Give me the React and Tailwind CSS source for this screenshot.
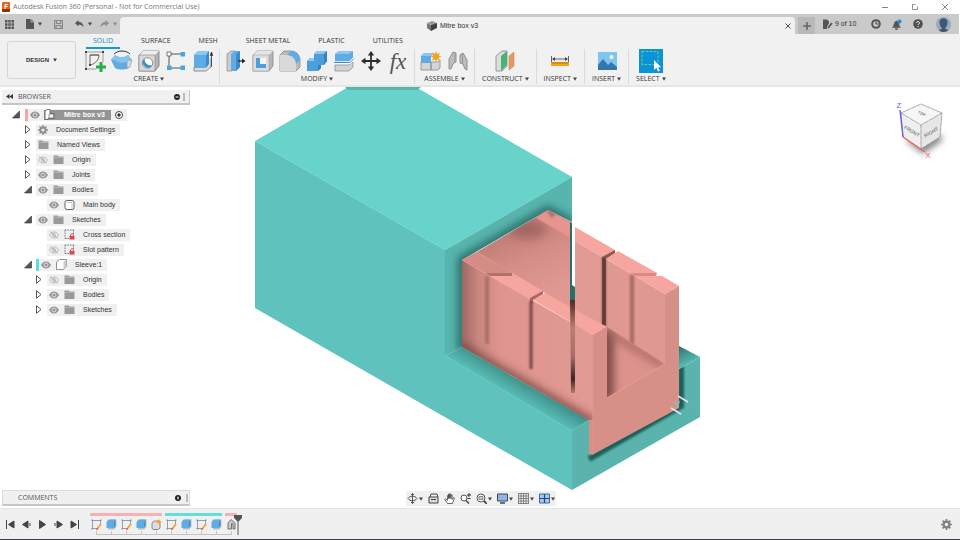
import React from "react";

const Svg = ({ w = 22, h = 22, box = "0 0 22 22", children }) => (
  <svg width={w} height={h} viewBox={box} fill="none" className="shrink-0" aria-hidden="true">
    {children}
  </svg>
);

const Caret = () => (
  <svg width="4" height="4" viewBox="0 0 4 4" className="shrink-0" aria-hidden="true">
    <path d="M0 0.500h4L2 3.800z" fill="#444" />
  </svg>
);

/* ---------- toolbar icons ---------- */

const SketchIcon = () => (
  <Svg>
    <path d="M3 2h15M2 3v15M3 19h9M19 3v9" stroke="#888" strokeWidth="0.800" />
    <path d="M6 5v10c5-1 9-5 9-10zM6 5l9 0" stroke="#666" strokeWidth="1" />
    <path d="M1 1h2v2H1zM18 1h2v2h-2zM1 18h2v2H1zM5 14h2v2H5z" fill="#444" />
    <path d="M15.500 12h3v3.500H22v3h-3.500V22h-3v-3.500H12v-3h3.500z" fill="#27ae48" />
  </Svg>
);
const RevolveIcon = () => (
  <Svg>
    <path d="M3 4C7 0 15 0 19 4" stroke="#333" strokeWidth="1" />
    <path d="M0 10l4-5c4 3 9 3 13 0l4 5-3 8c-4 2-10 2-14 0z" fill="#5fabe3" />
    <path d="M0 10l4-5c4 3 9 3 13 0l4 5c-3 0-4 0-5 2-3 1-7 1-10 0-1-2-3-2-6-2z" fill="#84c3ee" />
    <path d="M21 10l-2 7-3 1v-6c1-2 3-2 5-2z" fill="#d8d8d8" stroke="#999" strokeWidth="0.600" />
  </Svg>
);
const HoleIcon = () => (
  <Svg>
    <path d="M1 5l4-4h16v15l-4 5H1z" fill="#b5b5b5" stroke="#777" strokeWidth="0.800" />
    <path d="M1 5l4-4h16l-4 4z" fill="#eee" />
    <path d="M1 5h16v16H1z" fill="#d8d8d8" stroke="#888" strokeWidth="0.600" />
    <circle cx="9.500" cy="13" r="5.200" fill="#fff" stroke="#777" strokeWidth="0.800" />
    <path d="M6 9.500a5 5 0 0 0 7.500 6.500 7 7 0 0 1-7.500-6.500z" fill="#3b8fd0" stroke="#3b8fd0" />
  </Svg>
);
const PatternIcon = () => (
  <Svg>
    <path d="M6 4h10M4 6v10M6 18h10" stroke="#555" strokeWidth="1" />
    <path d="M2 2h4v4H2z" fill="#fff" stroke="#555" strokeWidth="0.800" />
    <path d="M15.500 2h4.500v4.500h-4.500zM2 15.500h4.500V20H2zM15.500 15.500H20V20h-4.500z" fill="#4ea3e0" />
  </Svg>
);
const ExtrudeIcon = () => (
  <Svg>
    <path d="M2 17v4h12l5-4V8" fill="#ddd" stroke="#777" strokeWidth="0.800" />
    <path d="M2 5l4-4h11l-3 4v13H2z" fill="#5fabe3" />
    <path d="M2 5l4-4h11l-3 4z" fill="#8cc8f0" />
    <path d="M14 5l3-4v13l-3 4z" fill="#3a8ccc" />
    <path d="M19.500 17V5M18.300 5.500L19.500 2l1.200 3.500z" stroke="#333" strokeWidth="0.800" fill="#333" />
  </Svg>
);
const PressPullIcon = () => (
  <Svg>
    <path d="M2 4l4-3h4v17l-3 3H2z" fill="#ccc" stroke="#888" strokeWidth="0.700" />
    <path d="M6 4l4-3h5v16l-4 4H6z" fill="#5fabe3" />
    <path d="M11 4l4-3v16l-4 4z" fill="#3a8ccc" />
    <path d="M13 11h5" stroke="#222" strokeWidth="1.200" />
    <path d="M17 8.500l3.500 2.500-3.500 2.500z" fill="#222" />
  </Svg>
);
const ShellIcon = () => (
  <Svg>
    <path d="M1 5l4-4h16v15l-4 5H1z" fill="#b5b5b5" stroke="#888" strokeWidth="0.800" />
    <path d="M1 5l4-4h16l-4 4z" fill="#e6e6e6" />
    <path d="M1 5h16v16H1z" fill="#ddd" stroke="#999" strokeWidth="0.500" />
    <path d="M4 8h10v10H4z" fill="#cde6f7" />
    <path d="M4 8h4v6l6 0v4H4z" fill="#4c9edb" />
    <path d="M8 8h6v6H8z" fill="#f4f4f4" />
  </Svg>
);
const FilletIcon = () => (
  <Svg>
    <path d="M1 5l4-4h7c5 0 9 4 9 9v7l-4 4H1z" fill="#bbb" stroke="#888" strokeWidth="0.800" />
    <path d="M1 5h7c5 0 9 4 9 9v7H1z" fill="#d9d9d9" />
    <path d="M8 5l4-4c5 0 9 4 9 9l-4 4c0-5-4-9-9-9z" fill="#5fabe3" />
  </Svg>
);
const CombineIcon = () => (
  <Svg>
    <path d="M1 11l3-3h4V4l3-3h10v10l-3 4h-3v3l-3 3H1z" fill="#4c9edb" />
    <path d="M1 11l3-3h4v3zM8 4l3-3h10l-3 3z" fill="#8cc8f0" />
    <path d="M18 4l3-3v10l-3 4zM12 15h3v3l-3 3z" fill="#3382c2" />
  </Svg>
);
const SplitIcon = () => (
  <Svg>
    <path d="M2 4l4-3h14v8l-4 3H2z" fill="#5fabe3" />
    <path d="M2 4l4-3h14l-4 3z" fill="#8cc8f0" />
    <path d="M2 15h14l4-3v5l-4 4H2z" fill="#d3d3d3" stroke="#888" strokeWidth="0.700" />
    <path d="M1 12.500h16l4-4" stroke="#fff" strokeWidth="2.500" />
    <path d="M1 12.500h16l4-4" stroke="#3a8ccc" strokeWidth="1" />
  </Svg>
);
const MoveIcon = () => (
  <Svg>
    <path d="M11 4v14M4 11h14" stroke="#2d2d2d" strokeWidth="1.800" />
    <path d="M11 1l3.200 4.500H7.800zM11 21l3.200-4.500H7.800zM1 11l4.500-3.200v6.400zM21 11l-4.500-3.200v6.400z" fill="#2d2d2d" />
  </Svg>
);
const FxIcon = () => (
  <span className="w-[22px] h-[22px] flex items-center justify-center font-['Liberation_Serif',serif] italic text-[23px] leading-none text-[#555]">fx</span>
);
const ComponentIcon = () => (
  <Svg>
    <path d="M1 12h10v8H1zM11 12h7l2-2v8l-2 2h-7z" fill="#d5d5d5" stroke="#888" strokeWidth="0.800" />
    <path d="M1 6l3-3h10l-3 3v7H1z" fill="#5fabe3" />
    <path d="M1 6l3-3h10l-3 3z" fill="#8cc8f0" />
    <path d="M16 1l1 3 3-1.500L18.500 5.500l3 1-3 1.200 1.500 3L17 9.200 16 12l-1.200-2.800-3 1.300 1.500-2.800-3-1.200 3-1L12 2.500 14.800 4z" fill="#f5a31a" />
  </Svg>
);
const JointIcon = () => (
  <Svg>
    <path d="M2 19V9l4-7 3 1v9l-2 1-1 1-2 5z" fill="#bdbdbd" stroke="#888" strokeWidth="0.900" />
    <path d="M20 20V10l-4-7-3 2v8l3 1 2 5z" fill="#bdbdbd" stroke="#888" strokeWidth="0.900" />
    <path d="M8 3v9M15.500 4v9" stroke="#999" />
  </Svg>
);
const ConstructIcon = () => (
  <Svg>
    <path d="M2 6l6-5h5v15l-5 5H2z" fill="#ddd" stroke="#888" strokeWidth="0.800" />
    <path d="M7 6l6-5v14l-6 6z" fill="#45b576" />
    <path d="M15 6l5-4v14l-5 4z" fill="#e79763" stroke="#cf7d4a" strokeWidth="0.500" />
  </Svg>
);
const InspectIcon = () => (
  <Svg>
    <path d="M2.500 6v6M19.500 6v6M4 9h14" stroke="#555" strokeWidth="0.900" />
    <path d="M3 9l3-2v4zM19 9l-3-2v4z" fill="#444" />
    <path d="M2 12h18v4H2z" fill="#f2a41c" />
    <path d="M4 12v2M6 12v2M8 12v2M10 12v2M12 12v2M14 12v2M16 12v2M18 12v2" stroke="#8a5a00" strokeWidth="0.600" />
  </Svg>
);
const InsertIcon = () => (
  <Svg>
    <path d="M2 2h19v18H2z" fill="#7fc5f4" />
    <path d="M2 15l5-6 5 6 3-3 6 5v3H2z" fill="#3577aa" />
    <circle cx="15.500" cy="7" r="2" fill="#fff7c9" />
  </Svg>
);
const SelectIcon = () => (
  <Svg w={24} h={24} box="0 0 24 24">
    <path d="M0 0h24v24H0z" fill="#0b93d8" />
    <path d="M3 2.500h16v13H3z" stroke="#7ddc6e" strokeWidth="0.900" strokeDasharray="2.500 1.500" />
    <path d="M15 11v10l2.400-2.200 1.600 3.700 1.800-0.800-1.600-3.500h3z" fill="#fff" />
  </Svg>
);

const groups = [
  { name: "CREATE", icons: [SketchIcon, RevolveIcon, HoleIcon, PatternIcon, ExtrudeIcon], wide: true },
  { name: "MODIFY", icons: [PressPullIcon, ShellIcon, FilletIcon, CombineIcon, SplitIcon, MoveIcon, FxIcon], wide: true },
  { name: "ASSEMBLE", icons: [ComponentIcon, JointIcon], wide: true },
  { name: "CONSTRUCT", icons: [ConstructIcon] },
  { name: "INSPECT", icons: [InspectIcon] },
  { name: "INSERT", icons: [InsertIcon] },
  { name: "SELECT", icons: [SelectIcon] },
];

const tabs = ["SOLID", "SURFACE", "MESH", "SHEET METAL", "PLASTIC", "UTILITIES"];

/* ---------- browser tree icons ---------- */

const Eye = ({ off }) => (
  <Svg w={10} h={8} box="0 0 10 8">
    {off ? (
      <>
        <path d="M0.500 4C2 1.500 3.500 1 5 1s3 0.500 4.500 3C8 6.500 6.500 7 5 7S2 6.500 0.500 4zM1 0.500l8 7" stroke="#aaa" strokeWidth="0.800" />
        <circle cx="5" cy="4" r="1.500" stroke="#aaa" strokeWidth="0.800" />
      </>
    ) : (
      <>
        <path d="M0 4C1.500 1.500 3 0.500 5 0.500S8.500 1.500 10 4C8.500 6.500 7 7.500 5 7.500S1.500 6.500 0 4z" fill="#959595" />
        <circle cx="5" cy="4" r="2" fill="#959595" stroke="#eee" strokeWidth="0.800" />
      </>
    )}
  </Svg>
);
const Folder = () => (
  <Svg w={11} h={9} box="0 0 11 9">
    <path d="M0.500 0.500h4l1 1h5V9h-10z" fill="#999" />
    <path d="M0.500 2.300h10" stroke="#ccc" strokeWidth="0.600" />
  </Svg>
);
const Gear = ({ size = 10, color = "#8d8d8d" }) => (
  <Svg w={size} h={size} box="0 0 10 10">
    <circle cx="5" cy="5" r="2.600" stroke={color} strokeWidth="2" />
    <path d="M5 0v2M5 8v2M0 5h2M8 5h2M1.500 1.500l1.300 1.300M7.200 7.200l1.300 1.300M1.500 8.500l1.300-1.300M7.200 2.800l1.300-1.300" stroke={color} strokeWidth="1.500" />
  </Svg>
);
const Body = () => (
  <Svg w={11} h={10} box="0 0 11 10">
    <rect x="1" y="0.500" width="9" height="9" rx="2" fill="#fff" stroke="#555" strokeWidth="0.900" />
    <path d="M3 2.500h5v6" stroke="#aab" strokeWidth="0.700" />
  </Svg>
);
const Cube = () => (
  <Svg w={11} h={11} box="0 0 11 11">
    <path d="M0.500 3l3-2.500h7v7l-3 3h-7z" fill="#fff" stroke="#777" strokeWidth="0.800" />
    <path d="M7.500 3l3-2.500v7l-3 3z" fill="#ccc" />
  </Svg>
);
const LockedSketch = () => (
  <Svg w={11} h={11} box="0 0 11 11">
    <path d="M1 1h8.500M1 1v8.500M9.500 1v5M1 9.500h5" stroke="#666" strokeWidth="0.900" strokeDasharray="1.500 1" />
    <path d="M5.500 7h5v3.500h-5z" fill="#d9484c" />
    <path d="M6.500 7c0-3 3-3 3 0" stroke="#d9484c" />
  </Svg>
);
const Assembly = () => (
  <Svg w={11} h={11} box="0 0 11 11">
    <path d="M1 2l2-1.500h3v4h4v5H4v1H1z" fill="#fff" stroke="#555" strokeWidth="0.800" />
    <path d="M5 5h4.500v4H5z" fill="#f4f4f4" stroke="#666" strokeWidth="0.600" />
  </Svg>
);

const Arrow = ({ open }) => (
  <Svg w={8} h={9} box="0 0 8 9">
    {open ? <path d="M7.500 1v7H0.500z" fill="#555" stroke="#333" strokeWidth="0.600" /> : <path d="M1.500 0.700v7.600l4.500-3.800z" fill="#fff" stroke="#444" strokeWidth="0.900" />}
  </Svg>
);

const tree = [
  { label: "Document Settings", icon: Gear, arrow: "closed" },
  { label: "Named Views", icon: Folder, arrow: "closed" },
  { label: "Origin", icon: Folder, eye: "off", arrow: "closed" },
  { label: "Joints", icon: Folder, eye: "on", arrow: "closed" },
  { label: "Bodies", icon: Folder, eye: "on", arrow: "open" },
  { label: "Main body", icon: Body, eye: "on", deep: true },
  { label: "Sketches", icon: Folder, eye: "on", arrow: "open" },
  { label: "Cross section", icon: LockedSketch, eye: "off", deep: true },
  { label: "Slot pattern", icon: LockedSketch, eye: "off", deep: true },
  { label: "Sleeve:1", icon: Cube, eye: "on", arrow: "open", bar: true },
  { label: "Origin", icon: Folder, eye: "off", arrow: "closed", deep: true },
  { label: "Bodies", icon: Folder, eye: "on", arrow: "closed", deep: true },
  { label: "Sketches", icon: Folder, eye: "on", arrow: "closed", deep: true },
];

const TreeRow = ({ row }) => (
  <li className={row.deep ? "flex items-center h-[15px] pl-[33px]" : "flex items-center h-[15px] pl-[22px]"}>
    <span className="w-3 flex">{row.arrow && <Arrow open={row.arrow === "open"} />}</span>
    <div className="flex items-center h-3 bg-[#f0f0f0] pr-[5px]">
      {row.bar && <span className="w-[3px] h-3 bg-[#5fdce0]" />}
      <span className="flex items-center gap-[5px] pl-[2px] pr-2">
        {row.eye && <Eye off={row.eye === "off"} />}
        <row.icon />
      </span>
      <span>{row.label}</span>
    </div>
  </li>
);

const BrowserPanel = () => (
  <section className="w-[188px]">
    <header className="flex items-center h-[15px] bg-[#f0f0f0] border-b-2 border-r border-[#c6c6c6] px-1 text-[#555] font-['Open_Sans',sans-serif]">
      <Svg w={7} h={5} box="0 0 7 5"><path d="M3.500 0v5L0 2.500zM7 0v5L3.500 2.500z" fill="#333" /></Svg>
      <h2 className="ml-[5px]">BROWSER</h2>
      <button className="ml-auto mr-[3px]" aria-label="Collapse browser">
        <Svg w={6} h={6} box="0 0 6 6"><circle cx="3" cy="3" r="3" fill="#222" /><path d="M1.500 3h3" stroke="#fff" /></Svg>
      </button>
      <span className="w-[2px] h-2 border-x border-[#bbb]" />
    </header>
    <ul className="mt-[2px]">
      <li className="flex items-center h-[15px] pl-[10px]">
        <Arrow open />
        <div className="ml-[5px] flex items-center h-3 bg-[#f0f0f0] pr-1">
          <span className="w-[3px] h-3 bg-[#f7a5a5]" />
          <span className="ml-[2px] mr-1 flex"><Eye /></span>
          <span className="flex items-center h-[10px] bg-[#959595] text-white font-bold pr-[6px]">
            <Assembly />
            <span className="ml-[9px]">Mitre box v3</span>
          </span>
          <label className="ml-1 flex">
            <input type="radio" defaultChecked aria-label="Activate Mitre box v3" className="appearance-none w-[8px] h-[8px] rounded-full border border-[#444] bg-[radial-gradient(circle,#333_35%,#fff_40%)]" />
          </label>
        </div>
      </li>
      {tree.map((row, i) => (
        <TreeRow key={i} row={row} />
      ))}
    </ul>
  </section>
);

/* ---------- 3d model ---------- */

const Model = () => (
  <svg viewBox="0 87 960 421" preserveAspectRatio="xMidYMid slice" className="absolute inset-0 w-full h-full" role="img" aria-label="Mitre box model">
    <defs>
      <filter id="soft" filterUnits="userSpaceOnUse" x="240" y="80" width="480" height="430"><feGaussianBlur stdDeviation="4" /></filter>
      <filter id="tiny" filterUnits="userSpaceOnUse" x="240" y="80" width="480" height="430"><feGaussianBlur stdDeviation="1.300" /></filter>
      <linearGradient id="wall" gradientUnits="userSpaceOnUse" x1="462" y1="0" x2="593" y2="0">
        <stop offset="0" stopColor="#9f6863" /><stop offset="0.120" stopColor="#c9857f" /><stop offset="0.300" stopColor="#de958f" /><stop offset="1" stopColor="#e29a94" />
      </linearGradient>
      <linearGradient id="slot" x1="0" y1="0" x2="0" y2="1">
        <stop offset="0" stopColor="#4a2b28" /><stop offset="0.300" stopColor="#bd7b75" /><stop offset="0.600" stopColor="#a96e68" /><stop offset="0.850" stopColor="#3c2523" /><stop offset="1" stopColor="#b87973" />
      </linearGradient>
      <linearGradient id="inside" gradientUnits="userSpaceOnUse" x1="520" y1="225" x2="550" y2="290">
        <stop offset="0" stopColor="#c07c76" /><stop offset="0.500" stopColor="#d68e88" /><stop offset="1" stopColor="#e09892" />
      </linearGradient>
      <linearGradient id="ledge" gradientUnits="userSpaceOnUse" x1="524" y1="380" x2="512" y2="400">
        <stop offset="0" stopColor="#3d8c86" /><stop offset="1" stopColor="#5ec8c0" />
      </linearGradient>
      <linearGradient id="backLedge" gradientUnits="userSpaceOnUse" x1="680" y1="346" x2="690" y2="366">
        <stop offset="0" stopColor="#2d746f" /><stop offset="1" stopColor="#5bc4bc" />
      </linearGradient>
      <clipPath id="frameClip"><path d="M445 250L572 177V222L548 210L462 260V347L445 356z" /></clipPath>
      <clipPath id="insideClip"><path d="M477 252L535 218L548 210L571 222V320L545 293z" /></clipPath>
      <clipPath id="leftClip"><path d="M462 260L490 276L530 299L593 335V454H590V421L462 347z" /></clipPath>
      <clipPath id="floorClip"><path d="M607 327L665 364L607 398z" /></clipPath>
      <clipPath id="frontClip"><path d="M572 431L589 420L683 367L700 357V417L572 490z" /></clipPath>
      <clipPath id="rightClip"><path d="M575 241L602 257L606 259L665 294V364L607 331L575 312z" /></clipPath>
    </defs>

    {/* outer box */}
    <path d="M255 141L350 86H414L572 177L445 250z" fill="#67d3ca" />
    <path d="M345 87H421L417 90H348z" fill="#56b6ae" />
    <path d="M255 141L445 250V356L572 431V490L255 308z" fill="#5fc2bc" />
    <path d="M445 250L572 177V222L548 210L462 260V347L445 356z" fill="#58b5ae" />
    <g clipPath="url(#frameClip)">
      <path d="M462 352V260L548 210L573 224" stroke="#26645f" strokeWidth="8" fill="none" filter="url(#soft)" />
    </g>
    <path d="M445 356L462 347L589 420L572 431z" fill="url(#ledge)" />
    <path d="M445 356L572 431L589 420" stroke="#63cbc3" strokeWidth="1" fill="none" />
    <path d="M572 431L589 420L683 367L700 357V417L572 490z" fill="#5ab4ad" />
    <path d="M679 346L700 357L683 367L679 369z" fill="url(#backLedge)" />
    <g clipPath="url(#frontClip)">
      <path d="M589 459L681 406V366" stroke="#1f5e59" strokeWidth="6" fill="none" filter="url(#tiny)" />
    </g>

    {/* sleeve, far side */}
    <path d="M477 252L548 210L571 222V320L545 293z" fill="url(#inside)" />
    <g clipPath="url(#insideClip)">
      <ellipse cx="528" cy="230" rx="18" ry="9" fill="#8d5852" filter="url(#soft)" opacity="0.600" />
      <path d="M536 218L548 210L571 223V238z" fill="#e5958e" />
      <path d="M545 209L556 214L552 218z" fill="#7a4641" filter="url(#tiny)" opacity="0.500" />
    </g>
    <path d="M575 227L615 250V253L606 259L602 257L575 241z" fill="#f6a69e" />
    <path d="M575 241L602 257V340L575 325z" fill="#e29a94" />
    <path d="M602 257L615 250V253L606 259V335L602 330z" fill="#8c5651" />
    <path d="M606 259L665 294V364L606 330z" fill="#e09892" />
    <path d="M606 259L618 251L657 273L656 276H662L679 286L665 294z" fill="#f6a69e" />
    <path d="M630 273H657L655 276H635z" fill="#d68b84" />
    <g clipPath="url(#rightClip)">
      <path d="M632 275V345" stroke="#99605b" strokeWidth="4" filter="url(#tiny)" opacity="0.800" />
      <path d="M604 256V330" stroke="#55302d" strokeWidth="3" filter="url(#tiny)" />
    </g>

    {/* sleeve floor */}
    <path d="M604 325L665 364L607 398z" fill="#dd938c" />
    <g clipPath="url(#floorClip)">
      <path d="M607 330V400" stroke="#7d4c47" strokeWidth="14" filter="url(#soft)" />
      <path d="M607 332L665 366" stroke="#a0645f" strokeWidth="6" filter="url(#soft)" />
    </g>

    {/* gap between the two far walls */}
    <path d="M572 172H575V285H572z" fill="#fff" />
    <path d="M570 222L572 223V285L575 287V300H570z" fill="#2a6e69" />

    {/* sleeve, near side */}
    <path d="M462 260L593 335V454H589V420L462 347z" fill="url(#wall)" />
    <path d="M462 260L477 252L512 273L543 291V293L533 299L530 299L490 276z" fill="#f1a098" />
    <path d="M462 260L477 252L512 273H485z" fill="#d48c85" />
    <path d="M485 273H512V276H490z" fill="#b3716b" />
    <path d="M490 276H517L543 291L530 298z" fill="#f6a69e" />
    <path d="M533 300L545 293L607 327L593 335z" fill="#f6a69e" />
    <path d="M530 298L543 291V294L533 300V304L530 302z" fill="#a9675f" />
    <g clipPath="url(#leftClip)">
      <path d="M459 346L593 423" stroke="#6d3f3b" strokeWidth="9" filter="url(#soft)" opacity="0.800" />
      <path d="M487 276V344" stroke="#a9706a" strokeWidth="4" filter="url(#tiny)" />
      <path d="M531 301V369" stroke="#74433f" strokeWidth="3" filter="url(#tiny)" />
    </g>
    <path d="M570 300H575V393H571z" fill="url(#slot)" />
    <path d="M593 335L607 327V398L665 364V294L679 286V408L592 455L589 452V420H593z" fill="#d69088" />
    <path d="M607 398L665 364" stroke="#e39c94" strokeWidth="1" />
    <path d="M593 335V454" stroke="#df978f" strokeWidth="1" />
    <path d="M678 396L688 402M671 408L681 414" stroke="#e6e6e6" strokeWidth="1.500" />
    <path d="M672 402L680 401L678 408z" fill="#a9a9a5" />
  </svg>
);

const ViewCube = () => (
  <svg width="60" height="66" viewBox="0 0 60 66" className="shrink-0" role="img" aria-label="View cube">
    <defs>
      <filter id="shadow" x="-30%" y="-30%" width="160%" height="160%"><feGaussianBlur stdDeviation="3" /></filter>
    </defs>
    <path d="M12 42L30 56L50 42L46 36z" fill="#888" filter="url(#shadow)" />
    <path d="M8 14L28 6L49 15L28 27z" fill="#f6f6f6" />
    <path d="M8 15L28 27V51L10 39z" fill="#efefef" />
    <path d="M28 27L49 15L47 39L28 51z" fill="#e6e6e6" />
    <path d="M8 15L28 6L49 15L28 27zM8 15L10 39L28 51V27M28 51L47 39L49 15" stroke="#888" strokeWidth="0.700" strokeDasharray="5 0.500" fill="none" />
    <path d="M7 12L10 39" stroke="#6262ee" strokeWidth="1.400" />
    <path d="M10 39L32 54" stroke="#f06464" strokeWidth="1.400" />
    <g className="font-['Liberation_Sans',sans-serif] font-bold" fill="#888" textAnchor="middle">
      <text x="19" y="35" fontSize="5" transform="rotate(31 19 33)">FRONT</text>
      <text x="38" y="36" fontSize="5" transform="rotate(-31 38 34)">RIGHT</text>
      <text x="29" y="17" fontSize="4" transform="rotate(24 29 15)">TOP</text>
    </g>
    <g className="font-['Liberation_Sans',sans-serif]" textAnchor="middle" fontSize="8">
      <text x="6" y="10" fill="#6262ee">Z</text>
      <text x="35" y="60" fill="#f06464">X</text>
    </g>
  </svg>
);

/* ---------- navigation bar under the canvas ---------- */

const navItems = [
  { name: "Orbit", menu: true, art: <path d="M5.500 0.500v10M4 2l1.500-1.500L7 2M4 9l1.500 1.500L7 9M1 5.500c2-3 7-3 9 0-2 3-7 3-9 0z" stroke="#444" strokeWidth="0.900" /> },
  { name: "Look at", art: <><path d="M1 4h9v6H1z" fill="#ddd" stroke="#444" /><path d="M2 4l1-3h6l1 3M3 6.500h5" stroke="#444" /></> },
  { name: "Pan", art: <path d="M3.500 10.500L0.800 6.500l1-0.700L3.500 7.500V2.500h1V5.500V1h1.200V5.500V1h1.200V5.500V2h1.200V6.500l1.500-2 0.800 0.500L8.500 10.500z" fill="#fff" stroke="#444" strokeWidth="0.800" /> },
  { name: "Zoom", art: <><circle cx="4" cy="5" r="3" fill="#fff" stroke="#555" /><path d="M6 7.500L9 10.500" stroke="#444" strokeWidth="1.500" /><path d="M9 0v4M7 2h4M7.500 5.500h3" stroke="#333" /></> },
  { name: "Fit", menu: true, art: <><circle cx="5" cy="5" r="4" fill="#fff" stroke="#555" /><path d="M3 3.500h4v3H3z" fill="#ccc" stroke="#666" strokeWidth="0.700" /><path d="M8 8l3 3" stroke="#444" strokeWidth="1.800" /></> },
  { name: "Display settings", menu: true, art: <><path d="M0.500 1h10v7h-10z" fill="#8bb6e6" stroke="#445" /><path d="M3 10h5" stroke="#445" strokeWidth="1.500" /></> },
  { name: "Grid and snaps", menu: true, art: <path d="M0.500 0.500h10M0.500 3h10M0.500 5.500h10M0.500 8h10M0.500 10.500h10M0.500 0v11M3 0v11M5.500 0v11M8 0v11M10.500 0v11" stroke="#777" strokeWidth="0.900" /> },
  { name: "Viewports", menu: true, art: <><path d="M0.500 1h10v9h-10z" fill="#a9c8ee" stroke="#456b9c" /><path d="M5.500 1v9M0.500 5.500h10" stroke="#234a80" strokeWidth="1.200" /></> },
];

/* ---------- timeline ---------- */

const TlSketch = () => (
  <Svg w={11} h={11} box="0 0 11 11">
    <path d="M1 1.500h8M1.500 1v8M2 9.500h5M9.500 2v4" stroke="#888" strokeWidth="0.800" />
    <path d="M0.500 0.500h1.500v1.500H0.500zM9 0.500h1.500v1.500H9zM0.500 9h1.500v1.500H0.500z" fill="#4ea3e0" />
    <path d="M6 10l4-5" stroke="#f0a030" strokeWidth="1.800" />
    <path d="M5.500 10.700l1-1.200" stroke="#d33" strokeWidth="1.200" />
  </Svg>
);
const TlExtrude = () => (
  <Svg w={11} h={11} box="0 0 11 11">
    <path d="M2 3l2-2.500h6.500V8L8 10.500H2z" fill="#bbb" />
    <path d="M0.500 3l2-2.500h7L8 3v6H0.500z" fill="#5fabe3" />
    <path d="M8 3l1.500-2.500v6L8 9z" fill="#3a8ccc" />
  </Svg>
);
const TlComponent = () => (
  <Svg w={11} h={11} box="0 0 11 11">
    <path d="M1 4l2-2h5l1 2v5l-2 1.500H2L1 9z" fill="#ddd" stroke="#777" strokeWidth="0.800" />
    <path d="M8 0l0.800 1.800L11 2.500 9.300 3.500 9 6 7.500 4 5.500 4.200 6.500 2.500z" fill="#f5a31a" />
  </Svg>
);
const TlJoint = () => (
  <Svg w={11} h={11} box="0 0 11 11">
    <path d="M2 10V4l3-3.500 4 3.500v6H7V5L5.500 4.500V10z" fill="#ccc" stroke="#666" strokeWidth="0.900" />
  </Svg>
);

const timeline = [
  { bar: "bg-[#fbb0b0] w-[72px]", track: "border-b", items: [TlSketch, TlExtrude, TlSketch, TlExtrude, TlComponent] },
  { bar: "bg-[#62dde0] w-[57px]", track: "border-b", items: [TlSketch, TlExtrude, TlSketch, TlExtrude] },
  { bar: "bg-[#fbb0b0] w-[12px]", track: "", items: [TlJoint] },
];

const playback = [
  { name: "Go to start", d: "M1.500 1v9M9 2v7L3.500 5.500z" },
  { name: "Step back", d: "M7 2v7L1.500 5.500zM9 4v3" },
  { name: "Play", d: "M2.500 1.500v8l6-4z" },
  { name: "Step forward", d: "M4 2v7l5.500-3.500zM2 4v3" },
  { name: "Go to end", d: "M9.500 1v9M2 2v7l5.500-3.500z" },
];

const Timeline = () => (
  <footer className="flex items-center h-8 shrink-0 bg-[#f0f0f0] border-t border-[#e2e2e2] border-b border-b-[#3c3c44] px-[5px]">
    <div className="flex gap-[5px]">
      {playback.map((p) => (
        <button key={p.name} aria-label={p.name}>
          <Svg w={11} h={11} box="0 0 11 11">
            <path d={p.d} fill="#444" stroke="#444" strokeWidth="1" />
          </Svg>
        </button>
      ))}
    </div>
    <ol className="ml-[10px] flex">
      {timeline.map((g, i) => (
        <li key={i} className="last:w-2">
          <div className={`h-[3px] ${g.bar}`} />
          <div className="flex gap-1 mt-[3px] pl-px">
            {g.items.map((Item, j) => (
              <button key={j} aria-label="Feature" className="shrink-0"><Item /></button>
            ))}
          </div>
          <div className={`ml-[6px] -mr-[6px] mt-px h-[4px] flex border-[#c4c4c4] ${g.track}`}>
            {g.items.map((_, j) => (
              <span key={j} className="w-[15px] border-l border-[#c4c4c4]" />
            ))}
          </div>
        </li>
      ))}
    </ol>
    <Svg w={10} h={22} box="0 0 10 22">
      <path d="M1 2h8v3L5.500 8.500V22h-1V8.500L1 5z" fill="#555" />
    </Svg>
    <button className="ml-auto mr-[3px]" aria-label="Timeline settings"><Gear size={11} color="#808080" /></button>
  </footer>
);

const App = () => {
  return (
    <div className="h-screen flex flex-col overflow-hidden bg-white text-[7px] leading-[10px] text-[#333] font-['Liberation_Sans',sans-serif]">
      {/* title bar */}
      <div className="flex items-center h-[14px] shrink-0 px-[2px]">
        <Svg w={8} h={10} box="0 0 8 10">
          <rect width="8" height="10" rx="1" fill="#e8641b" />
          <path d="M0 7h8v2l-1 1H1L0 9z" fill="#8c3005" />
          <path d="M3 7V2.500h3M3 4.500h2.500" stroke="#fff" />
        </Svg>
        <span className="ml-[3px] text-[#777] font-['Open_Sans',sans-serif]">Autodesk Fusion 360 (Personal - Not for Commercial Use)</span>
        <div className="ml-auto mr-[10px] flex gap-6">
          <button aria-label="Minimize"><Svg w={6} h={6} box="0 0 6 6"><path d="M0 3.500h6" stroke="#666" strokeWidth="0.800" /></Svg></button>
          <button aria-label="Maximize"><Svg w={6} h={6} box="0 0 6 6"><path d="M0.500 0.500v5h5v-3M0.500 0.500h3" stroke="#777" strokeWidth="0.800" /></Svg></button>
          <button aria-label="Close"><Svg w={6} h={6} box="0 0 6 6"><path d="M0 0l6 6M6 0L0 6" stroke="#666" strokeWidth="0.800" /></Svg></button>
        </div>
      </div>

      {/* document tabs */}
      <div className="flex h-5 shrink-0 bg-[#cacaca] border-r border-white">
        <div className="w-[120px] flex items-center pl-[5px]">
          <button aria-label="Data panel">
            <Svg w={9} h={9} box="0 0 9 9">
              <path d="M0 0h2.500v2.500H0zM3.200 0h2.500v2.500H3.200zM6.500 0H9v2.500H6.500zM0 3.200h2.500v2.500H0zM3.200 3.200h2.500v2.500H3.200zM6.500 3.200H9v2.500H6.500zM0 6.500h2.500V9H0zM3.200 6.500h2.500V9H3.200zM6.500 6.500H9V9H6.500z" fill="#555" />
            </Svg>
          </button>
          <button className="ml-3 flex items-center gap-1" aria-label="File">
            <Svg w={8} h={10} box="0 0 8 10"><path d="M0 0h5l3 3v7H0z" fill="#555" /><path d="M5 0v3h3" stroke="#ccc" strokeWidth="0.700" /></Svg>
            <Caret />
          </button>
          <button className="ml-3" aria-label="Save">
            <Svg w={9} h={9} box="0 0 9 9"><path d="M0.500 0.500h8v8h-8zM2.500 0.500v3h4v-3M2 8.500v-3h5v3" stroke="#888" strokeWidth="1.200" /></Svg>
          </button>
          <button className="ml-3 flex items-center gap-1" aria-label="Undo">
            <Svg w={9} h={8} box="0 0 9 8"><path d="M3.500 0v2c3 0 5 2 5 5.500C7.500 5.500 6 4.500 3.500 4.500v2L0 3.200z" fill="#555" /></Svg>
            <Caret />
          </button>
          <button className="ml-2 flex items-center gap-1 opacity-50" aria-label="Redo">
            <Svg w={9} h={8} box="0 0 9 8"><path d="M5.500 0v2c-3 0-5 2-5 5.500C1.500 5.500 3 4.500 5.500 4.500v2L9 3.200z" fill="#555" /></Svg>
            <Caret />
          </button>
        </div>
        <div className="flex-1 mt-[3px] bg-[#f1f1f1] flex items-center rounded-t-sm">
          <div className="flex-1 flex items-center justify-center gap-[3px]">
            <Svg w={10} h={10} box="0 0 10 10">
              <path d="M0 2l5-2 5 2-5 2z" fill="#999" /><path d="M0 2l4 2v6L0 7z" fill="#777" /><path d="M10 2L4 4v6l6-3z" fill="#444" />
            </Svg>
            <span>Mitre box v3</span>
          </div>
          <button className="mr-1" aria-label="Close tab"><Svg w={6} h={6} box="0 0 6 6"><path d="M0.500 0.500l5 5M5.500 0.500l-5 5" stroke="#555" /></Svg></button>
        </div>
        <div className="w-[164px] flex items-center">
          <button className="ml-[3px] w-[17px] mt-[3px] h-[17px] bg-[#b9b9b9] flex items-center justify-center" aria-label="New tab">
            <Svg w={8} h={8} box="0 0 8 8"><path d="M4 0v8M0 4h8" stroke="#666" strokeWidth="1.600" /></Svg>
          </button>
          <button className="ml-2 flex items-center gap-[2px]">
            <Svg w={10} h={10} box="0 0 10 10"><path d="M0 0.500h4l2 2v2l-2 3V10H0z" fill="#555" /><path d="M5 9l4-5" stroke="#555" strokeWidth="1.800" /></Svg>
            <span>9 of 10</span>
          </button>
          <div className="ml-auto mr-2 flex items-center gap-[11px]">
            <button aria-label="Job status"><Svg w={10} h={10} box="0 0 10 10"><circle cx="5" cy="5" r="4.800" fill="#555" /><circle cx="5" cy="5" r="2.800" fill="#ccc" /><path d="M5 2.500V5h2.500" stroke="#444" /></Svg></button>
            <button aria-label="Notifications"><Svg w={10} h={11} box="0 0 10 11"><path d="M0.500 8.500c2-1 1-6 4-6.500 3 0.500 2 5.500 4 6.500zM3.500 9.500h2v1H3.500z" fill="#555" stroke="#555" strokeWidth="0.600" /><circle cx="7.500" cy="2.500" r="2" fill="#0b93d8" /></Svg></button>
            <button className="mr-[2px]" aria-label="Help"><Svg w={10} h={10} box="0 0 10 10"><circle cx="5" cy="5" r="4.800" fill="#505050" /><path d="M3.500 4c0-2 3-2 3 0 0 1-1.500 1-1.500 2M5 7v1" stroke="#fff" /></Svg></button>
            <button aria-label="Account"><Svg w={15} h={15} box="0 0 15 15"><circle cx="7.500" cy="7.500" r="7.500" fill="#93a9c4" /><path d="M3.500 5c0-5 8-5 8 0 0 3-1 5-2 5.500v1.500l3 1.300c-3 2.300-7 2.300-10 0l3-1.300v-1.500c-1-0.500-2-2.500-2-5.500z" fill="#43566f" /></Svg></button>
          </div>
        </div>
      </div>

      {/* ribbon */}
      <div className="flex shrink-0 h-[53px] bg-[#f1f1f1] border-b-2 border-[#e6e6e6] pl-[7px] font-['Open_Sans',sans-serif]">
        <button className="mt-[7px] w-[69px] h-[38px] shrink-0 border border-[#d4d4d4] rounded-[3px] flex items-center justify-center gap-1 font-['Liberation_Sans',sans-serif] font-bold text-[6px] text-[#333]">
          DESIGN <Caret />
        </button>
        <div className="flex flex-col">
          <nav className="flex gap-[28px] pl-[17px] h-[15px]">
            {tabs.map((tab, i) => (
              <a key={tab} href="#" className={i === 0 ? "-mx-[7px] px-[7px] pt-[2px] border-b-2 border-[#0e9bdc] text-[#0e8fd0]" : "pt-[2px]"}>
                {tab}
              </a>
            ))}
          </nav>
          <div className="flex pl-[3px]">
            {groups.map((g) => (
              <div key={g.name} className={g.wide ? "flex flex-col items-center h-[35px] px-[5px] border-r border-[#dadada]" : "flex flex-col items-center h-[35px] px-[7px] border-r border-[#dadada] last:border-0"}>
                <div className="flex items-center gap-[5px] h-6">
                  {g.icons.map((Icon, i) => (
                    <button key={i} aria-label={`${g.name} tool`}><Icon /></button>
                  ))}
                </div>
                <button className="mt-px flex items-center gap-[2px]">{g.name} <Caret /></button>
              </div>
            ))}
          </div>
        </div>
      </div>

      {/* canvas */}
      <main className="relative flex-1 min-h-0">
        <Model />
        <div className="relative h-full flex flex-col justify-between">
          <div className="flex justify-between pt-[3px] pl-[2px] pr-[7px]">
            <BrowserPanel />
            <div className="pt-2"><ViewCube /></div>
          </div>
          <div className="grid grid-cols-[1fr_auto_1fr] items-end pb-[2px] pl-[2px]">
            <section className="w-[188px] flex items-center h-4 bg-[#f0f0f0] border border-[#dcdcdc] border-b-2 border-b-[#c6c6c6] pl-[15px] pr-[1px] text-[#555] font-['Open_Sans',sans-serif]">
              <h2>COMMENTS</h2>
              <button className="ml-auto mr-[5px]" aria-label="Add comment">
                <Svg w={6} h={6} box="0 0 6 6"><circle cx="3" cy="3" r="3" fill="#222" /><path d="M3 1.500v3M2 3h2" stroke="#fff" strokeWidth="0.800" /></Svg>
              </button>
              <span className="w-[2px] h-2 border-x border-[#bbb]" />
            </section>
            <div className="flex items-center gap-[5px] h-[15px] bg-[#f0f0f0] px-px">
              {navItems.map((n) => (
                <button key={n.name} aria-label={n.name} className="flex items-center gap-px">
                  <Svg w={11} h={11} box="0 0 11 11">{n.art}</Svg>
                  {n.menu && <Caret />}
                </button>
              ))}
            </div>
          </div>
        </div>
      </main>

      <Timeline />
    </div>
  );
};

export default App;
